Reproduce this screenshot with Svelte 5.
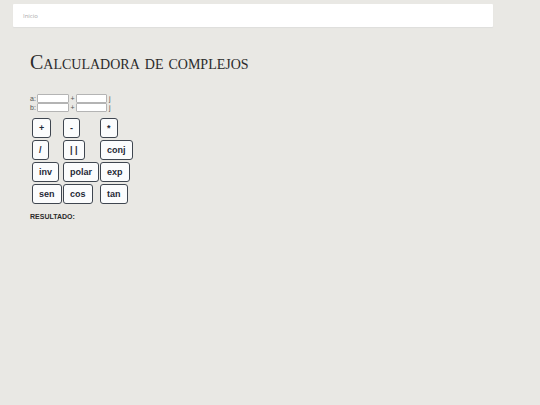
<script lang="ts">
  type Complex = { re: number; im: number };

  let fields = $state([
    { name: 'a', re: '', im: '' },
    { name: 'b', re: '', im: '' }
  ]);
  let result = $state('');

  const operations = ['+', '-', '*', '/', '| |', 'conj', 'inv', 'polar', 'exp', 'sen', 'cos', 'tan'];

  const read = (i: number): Complex => ({ re: Number(fields[i].re), im: Number(fields[i].im) });
  const mul = (x: Complex, y: Complex) => ({ re: x.re * y.re - x.im * y.im, im: x.re * y.im + x.im * y.re });
  const abs = (x: Complex) => Math.hypot(x.re, x.im);
  const inv = (x: Complex) => ({ re: x.re / abs(x) ** 2, im: -x.im / abs(x) ** 2 });
  const sin = (x: Complex) => ({ re: Math.sin(x.re) * Math.cosh(x.im), im: Math.cos(x.re) * Math.sinh(x.im) });
  const cos = (x: Complex) => ({ re: Math.cos(x.re) * Math.cosh(x.im), im: -Math.sin(x.re) * Math.sinh(x.im) });
  const show = (x: Complex) => `${x.re} + ${x.im} j`;

  function calculate(op: string) {
    const a = read(0);
    const b = read(1);
    if (op === '+') result = show({ re: a.re + b.re, im: a.im + b.im });
    if (op === '-') result = show({ re: a.re - b.re, im: a.im - b.im });
    if (op === '*') result = show(mul(a, b));
    if (op === '/') result = show(mul(a, inv(b)));
    if (op === '| |') result = String(abs(a));
    if (op === 'conj') result = show({ re: a.re, im: -a.im });
    if (op === 'inv') result = show(inv(a));
    if (op === 'polar') result = `${abs(a)} ∠ ${Math.atan2(a.im, a.re)}`;
    if (op === 'exp') result = show({ re: Math.exp(a.re) * Math.cos(a.im), im: Math.exp(a.re) * Math.sin(a.im) });
    if (op === 'sen') result = show(sin(a));
    if (op === 'cos') result = show(cos(a));
    if (op === 'tan') result = show(mul(sin(a), inv(cos(a))));
  }
</script>

<div class="page">
  <nav>
    <a href="#inicio">Inicio</a>
  </nav>

  <main>
    <h1>Calculadora de complejos</h1>

    <div class="numbers">
      {#each fields as field}
        <div class="number">
          <label for="{field.name}-re">{field.name}:</label>
          <input id="{field.name}-re" type="text" bind:value={field.re} />
          <label class="plus" for="{field.name}-im">+</label>
          <input id="{field.name}-im" type="text" bind:value={field.im} />
          <span class="unit">j</span>
        </div>
      {/each}
    </div>

    <div class="operations">
      {#each operations as op}
        <button type="button" onclick={() => calculate(op)}>{op}</button>
      {/each}
    </div>

    <p class="result">RESULTADO: {result}</p>
  </main>
</div>

<style>
  :global(body) {
    background: #e9e8e4;
    color: #2b2b2b;
    font-family: "Liberation Sans", Arial, sans-serif;
  }

  .page {
    padding: 4px 47px 0 13px;
  }

  nav {
    display: flex;
    align-items: center;
    height: 23px;
    padding: 0 10px;
    background: #fff;
    border-radius: 1px;
    box-shadow: 0 1px 1px #dededc;
  }

  nav a {
    color: #aaa;
    font-family: "Open Sans", sans-serif;
    font-size: 6px;
    text-decoration: none;
  }

  main {
    padding: 22px 17px;
  }

  h1 {
    margin: 0;
    font-family: "Liberation Serif", "Times New Roman", serif;
    font-size: 20px;
    font-weight: 400;
    font-variant: small-caps;
    line-height: 27px;
  }

  .numbers {
    margin-top: 18px;
  }

  .number {
    display: grid;
    grid-template-columns: 7px 32px 7px 31px auto;
    height: 9px;
    color: #555;
    font-size: 7px;
    line-height: 9px;
  }

  .plus {
    text-align: center;
  }

  .unit {
    padding-left: 2px;
  }

  input {
    box-sizing: border-box;
    width: 100%;
    min-width: 0;
    height: 9px;
    padding: 0 1px;
    background: #fff;
    border: 1px solid #b4b4b4;
    border-radius: 1px;
    font-family: inherit;
    font-size: 7px;
  }

  .operations {
    display: grid;
    grid-template-columns: 29px 35px auto;
    gap: 2px;
    justify-content: start;
    justify-items: start;
    padding: 6px 2px 0;
  }

  button {
    height: 20px;
    padding: 0 6px;
    background: #fbfcfd;
    border: 1px solid #3f4650;
    border-radius: 3px;
    color: #1f2937;
    font-family: inherit;
    font-size: 9px;
    font-weight: 700;
    white-space: nowrap;
    cursor: pointer;
  }

  button:hover {
    background: #e9edf2;
  }

  .result {
    margin: 8px 0 0;
    font-size: 7px;
    font-weight: 700;
    line-height: 9px;
  }
</style>
